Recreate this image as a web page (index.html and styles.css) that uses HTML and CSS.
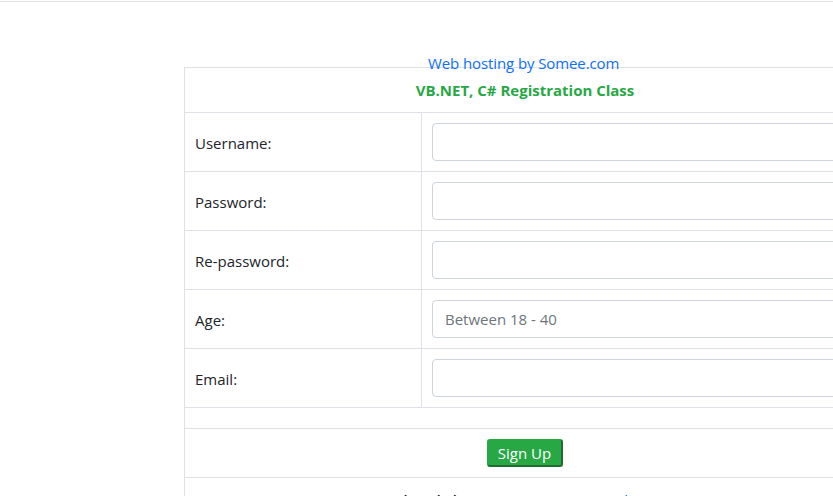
FILE: index.html
```html
<!DOCTYPE html>
<html>
<head>
<meta charset="utf-8">
<link rel="stylesheet" href="styles.css">
</head>
<body>
<div class="topbar"></div>
<a class="hosting" href="#">Web hosting by Somee.com</a>
<div class="wrap">
<table class="reg">
  <colgroup><col class="c1"><col class="c2"></colgroup>
  <tr><th colspan="2" class="title">VB.NET, C# Registration Class</th></tr>
  <tr><td class="lbl">Username:</td><td class="fld"><input class="inp" type="text"></td></tr>
  <tr><td class="lbl">Password:</td><td class="fld"><input class="inp" type="password"></td></tr>
  <tr><td class="lbl">Re-password:</td><td class="fld"><input class="inp" type="password"></td></tr>
  <tr><td class="lbl">Age:</td><td class="fld"><input class="inp" type="text" placeholder="Between 18 - 40"></td></tr>
  <tr><td class="lbl">Email:</td><td class="fld"><input class="inp" type="text"></td></tr>
  <tr><td colspan="2" class="empty"></td></tr>
  <tr><td colspan="2" class="center"><button class="btn">Sign Up</button></td></tr>
  <tr><td colspan="2" class="center foot"><b>Already have an account?</b> <a href="#">Login here</a></td></tr>
</table>
</div>
</body>
</html>
```
FILE: styles.css
```css
html, body { margin: 0; padding: 0; overflow: hidden; background: #fff; }
body { font-family: "Open Sans", "Noto Sans", sans-serif; font-size: 15px; color: #212529; width: 833px; height: 496px; position: relative; }
.topbar { height: 1px; border-bottom: 1px solid #e0e0e0; }
.hosting { position: absolute; left: 428px; top: 53px; font-size: 15px; color: #0d6efd; text-decoration: none; z-index: 2; letter-spacing: -0.1px; }
.wrap { padding-top: 65px; padding-left: 184px; width: 700px; }
.reg { border-collapse: collapse; width: 682px; table-layout: fixed; }
.c1 { width: 237px; }
.reg th, .reg td { border: 1px solid #dee2e6; padding: 10px; }
.reg .title { color: #28a745; font-weight: bold; font-size: 15px; text-align: center; height: 24px; padding: 10px; }
.lbl { height: 38px; vertical-align: middle; padding-top: 11px !important; padding-bottom: 9px !important; }
.fld { height: 38px; }
.inp { display: block; box-sizing: border-box; width: 100%; height: 38px; border: 1px solid #ced4da; border-radius: 4px; padding: 6px 12px; font: inherit; font-size: 15px; color: #495057; }
.inp::placeholder { color: #6c757d; }
.empty { height: 0; padding: 10px; }
.center { text-align: center; }
.btn { background: #28a745; color: #fff; border: 1px solid #28a745; border-right: 2px solid #1c6e31; border-bottom: 2px solid #1c6e31; border-radius: 3px; font: inherit; font-size: 15px; height: 28px; width: 76px; padding: 0; line-height: 24px; vertical-align: top; }
.foot { padding-top: 12px !important; }
.foot b { font-weight: 600; color: #222; }
.foot a { color: #0d6efd; text-decoration: none; }
```
